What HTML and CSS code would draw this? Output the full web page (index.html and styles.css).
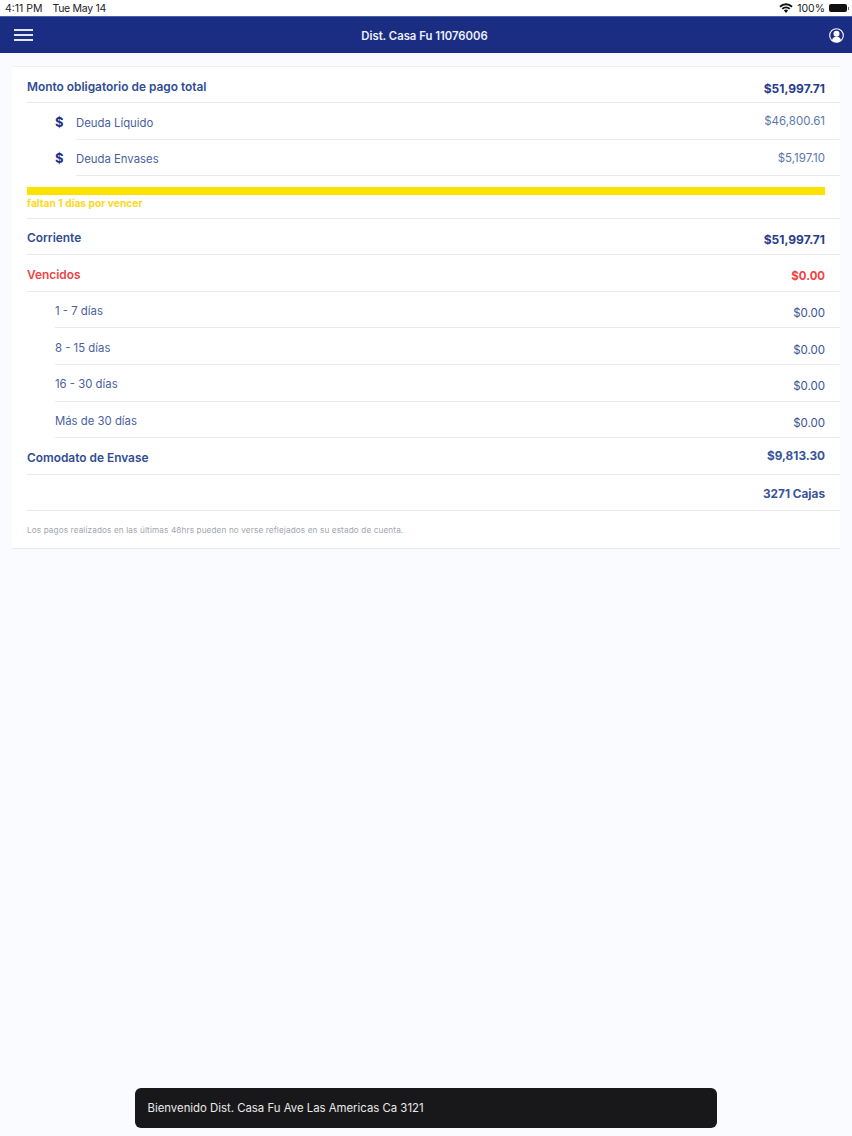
FILE: index.html
```html
<!DOCTYPE html>
<html lang="es">
<head>
<meta charset="utf-8">
<title>Estado de cuenta</title>
<link rel="stylesheet" href="styles.css">
</head>
<body>
<div class="status">
  <div class="status-left"><span>4:11 PM</span><span class="date">Tue May 14</span></div>
  <div class="status-right">
    <svg class="wifi" width="14" height="10" viewBox="0 0 14 10"><path d="M7 10 4.9 7.6a3 3 0 0 1 4.2 0z M3.9 6.6 2.6 5.2a6.4 6.4 0 0 1 8.8 0L10.100 6.600a4.500 4.500 0 0 0-6.200 0z M1.700 4.400.3 3a9.700 9.700 0 0 1 13.400 0L12.300 4.400a7.700 7.700 0 0 0-10.600 0z" fill="#111"/></svg>
    <span>100%</span>
    <span class="battery"></span>
  </div>
</div>
<header class="nav">
  <div class="burger"><i></i><i></i><i></i></div>
  <div class="nav-title">Dist. Casa Fu 11076006</div>
  <svg class="user" width="15" height="15" viewBox="0 0 15 15"><circle cx="7.500" cy="7.500" r="6.800" fill="#1a2d82" stroke="#fff" stroke-width="1.100"/><circle cx="7.500" cy="5.800" r="3" fill="#fff"/><path d="M2.900 12.400c.5-2.600 2.300-3.700 4.600-3.700s4.100 1.100 4.600 3.700a6.500 6.500 0 0 1-9.200 0z" fill="#fff"/></svg>
</header>
<main class="card">
  <div class="row head first"><span class="label t1">Monto obligatorio de pago total</span><span class="value strong t3">$51,997.71</span></div>
  <div class="row icon-row"><span class="name"><b class="dollar">$</b><span class="label-sm t2">Deuda Líquido</span></span><span class="value t0">$46,800.61</span></div>
  <div class="row icon-row"><span class="name"><b class="dollar">$</b><span class="label-sm t2">Deuda Envases</span></span><span class="value t0">$5,197.10</span></div>
  <div class="progress">
    <div class="bar"></div>
    <div class="warn">faltan 1 días por vencer</div>
  </div>
  <div class="row head"><span class="label t1">Corriente</span><span class="value strong t3">$51,997.71</span></div>
  <div class="row head"><span class="label red t1">Vencidos</span><span class="value bold red t3">$0.00</span></div>
  <div class="row sub"><span class="label-sm t1">1 - 7 días</span><span class="value t3">$0.00</span></div>
  <div class="row sub"><span class="label-sm t1">8 - 15 días</span><span class="value t3">$0.00</span></div>
  <div class="row sub"><span class="label-sm t1">16 - 30 días</span><span class="value t3">$0.00</span></div>
  <div class="row sub"><span class="label-sm t1">Más de 30 días</span><span class="value t3">$0.00</span></div>
  <div class="row head"><span class="label t2">Comodato de Envase</span><span class="value bold t0">$9,813.30</span></div>
  <div class="row head"><span></span><span class="value bold t1">3271 Cajas</span></div>
  <p class="note">Los pagos realizados en las últimas 48hrs pueden no verse reflejados en su estado de cuenta.</p>
</main>
<div class="toast">Bienvenido Dist. Casa Fu Ave Las Americas Ca 3121</div>
</body>
</html>
```
FILE: styles.css
```css
* { box-sizing: border-box; }
html, body { height: 100%; }
body {
  margin: 0;
  height: 1136px;
  overflow: hidden;
  background: #f9fbff;
  font-family: Inter, "Liberation Sans", sans-serif;
  color: #3a5499;
  position: relative;
}
.status {
  height: 16px;
  background: #fff;
  display: flex;
  justify-content: space-between;
  align-items: center;
  padding: 0 5px 0 5px;
  font-size: 10.500px;
  color: #222;
}
.status-left { display: flex; gap: 10px; }
.date { letter-spacing: -.3px; }
.status-right { display: flex; align-items: center; gap: 4px; }
.battery {
  width: 18px;
  height: 8px;
  border-radius: 2px;
  background: #111;
  display: block;
  position: relative;
}
.battery::after {
  content: "";
  position: absolute;
  right: -2px;
  top: 2.500px;
  width: 1px;
  height: 3px;
  background: #666;
}
.nav {
  height: 37px;
  background: #1a2d82;
  border-top: 1px solid #4a62ae;
  display: flex;
  align-items: center;
  justify-content: space-between;
  padding: 0 8px 0 14px;
  position: relative;
}
.burger { width: 19px; display: flex; flex-direction: column; gap: 3px; }
.burger i { display: block; height: 2px; background: #dfe5f5; }
.nav-title {
  position: absolute;
  left: 0;
  right: 0;
  text-align: center;
  color: #eef1fa;
  font-size: 11.300px;
  font-weight: 600;
  padding-top: 2px;
  padding-right: 3px;
}
.card {
  margin: 13px 12px 0;
  background: #fff;
  border-top: 1px solid #eef0f4;
  border-bottom: 1px solid #e6e8ee;
  padding-left: 15px;
  height: 483px;
}
.row {
  height: 36.600px;
  border-bottom: 1px solid #e9ebef;
  display: flex;
  justify-content: space-between;
  align-items: center;
  padding-right: 15px;
}
.first { height: 36px; }
.icon-row { margin-left: 49px; }
.sub { margin-left: 28px; }
.name { display: flex; align-items: center; }
.dollar {
  font-size: 13px;
  font-weight: 700;
  color: #1f3187;
  width: 21px;
  margin-left: -21px;
  position: relative;
  top: 1px;
}
.label { font-size: 11.900px; font-weight: 600; color: #2f4c93; }
.label-sm { font-size: 11.350px; color: #4a5f9e; }
.value { font-size: 11.500px; color: #5a78ae; }
.sub .value { color: #3a5499; }
.strong { font-size: 12px; font-weight: 700; color: #2a3c8c; }
.bold { font-size: 11.800px; font-weight: 700; color: #3a5499; }
.label.red, .value.red { color: #ef4444; }
.value.red { font-size: 11.400px; }
.t0 { position: relative; top: .5px; }
.t1 { position: relative; top: 1.500px; }
.t2 { position: relative; top: 2px; }
.t3 { position: relative; top: 3.500px; }
.progress {
  height: 42.400px;
  padding: 10.400px 15px 0 0;
  border-bottom: 1px solid #e9ebef;
}
.bar { height: 8px; background: #fde100; }
.warn {
  font-size: 10.250px;
  font-weight: 700;
  color: #fbd922;
  margin-top: 2px;
  line-height: 12px;
}
.note {
  margin: 0;
  padding-top: 13.500px;
  font-size: 8.200px;
  line-height: 10px;
  color: #a3a6ad;
  letter-spacing: .12px;
}
.toast {
  position: absolute;
  left: 135px;
  top: 1088px;
  width: 582px;
  height: 40px;
  background: #18181a;
  border-radius: 6px;
  color: #e9e9e9;
  font-size: 11.370px;
  display: flex;
  align-items: center;
  padding-left: 12.500px;
}
```
